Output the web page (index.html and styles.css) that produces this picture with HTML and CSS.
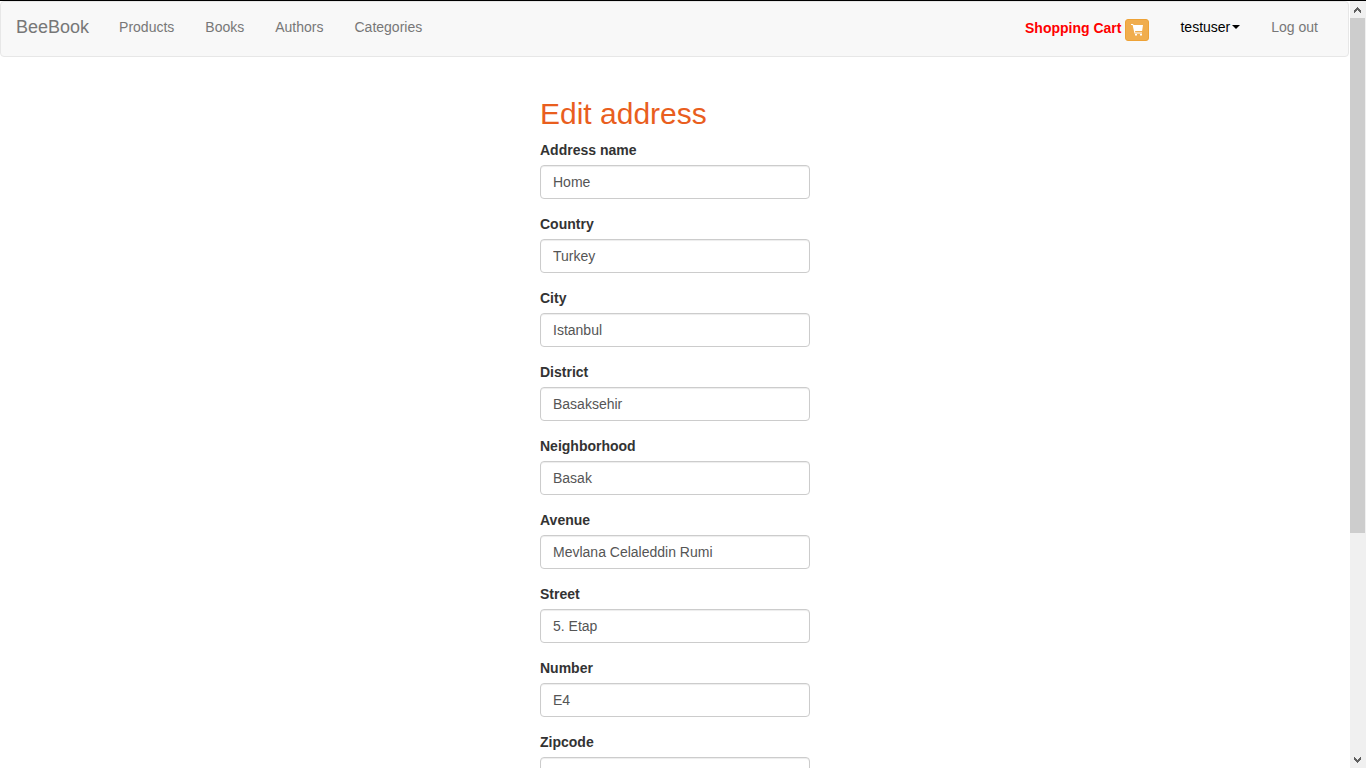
FILE: index.html
```html
<!DOCTYPE html>
<html lang="en">
<head>
<meta charset="utf-8">
<title>BeeBook - Edit address</title>
<link rel="stylesheet" href="styles.css">
</head>
<body>
<div class="viewport">
  <div class="page">
    <nav class="navbar">
      <a class="brand" href="#">BeeBook</a>
      <div class="nav-links">
        <a href="#">Products</a>
        <a href="#">Books</a>
        <a href="#">Authors</a>
        <a href="#">Categories</a>
      </div>
      <div class="nav-user">
        <div class="cart">
          <a class="cart-label" href="#">Shopping Cart</a>
          <button class="cart-button" type="button" aria-label="Open cart">
            <svg width="12" height="12" viewBox="0 0 12 12" aria-hidden="true">
              <path d="M0 0h2l.6 1H12l-.9 6H4l.3 1.5H11v1H3.5L1.6 1H0z"/>
              <path d="M4 10h2v1.5H4zM9 10h2v1.5H9z"/>
            </svg>
          </button>
        </div>
        <a class="user-menu" href="#">testuser<span class="caret"></span></a>
        <a href="#">Log out</a>
      </div>
    </nav>
    <main>
      <form class="address-form">
        <h2>Edit address</h2>
        <div class="field"><label for="name">Address name</label><input id="name" type="text" value="Home"></div>
        <div class="field"><label for="country">Country</label><input id="country" type="text" value="Turkey"></div>
        <div class="field"><label for="city">City</label><input id="city" type="text" value="Istanbul"></div>
        <div class="field"><label for="district">District</label><input id="district" type="text" value="Basaksehir"></div>
        <div class="field"><label for="neighborhood">Neighborhood</label><input id="neighborhood" type="text" value="Basak"></div>
        <div class="field"><label for="avenue">Avenue</label><input id="avenue" type="text" value="Mevlana Celaleddin Rumi"></div>
        <div class="field"><label for="street">Street</label><input id="street" type="text" value="5. Etap"></div>
        <div class="field"><label for="number">Number</label><input id="number" type="text" value="E4"></div>
        <div class="field"><label for="zipcode">Zipcode</label><input id="zipcode" type="text"></div>
      </form>
    </main>
  </div>
  <div class="scrollbar" aria-hidden="true">
    <svg class="arrow" width="16" height="17" viewBox="0 0 16 17"><path d="M7 6h1v1h1v1h1v1h1v3h-1v-1H9v-1H8V9H7v1H6v1H5v1H4V9h1V8h1V7h1z"/></svg>
    <div class="track"><div class="thumb"></div></div>
    <svg class="arrow" width="16" height="17" viewBox="0 0 16 17"><path d="M4 6h1v1h1v1h1v1h1V8h1V7h1V6h1v3h-1v1H9v1H8v1H7v-1H6v-1H5V9H4z"/></svg>
  </div>
</div>
</body>
</html>
```
FILE: styles.css
```css
* {
  box-sizing: border-box;
}

body {
  margin: 0;
  color: #333;
  background: #fff;
  font: 14px/20px "Liberation Sans", Arial, sans-serif;
}

.viewport {
  display: flex;
  height: 100vh;
  overflow: hidden;
  border-top: 1px solid #000;
}

.page {
  flex: 1;
  min-width: 0;
  overflow: hidden;
}

.navbar {
  display: flex;
  align-items: flex-start;
  gap: 30px;
  min-height: 56px;
  margin-right: 1px;
  padding: 15px 30px 15px 15px;
  border: 1px solid #e7e7e7;
  border-radius: 4px;
  background: #f8f8f8;
}

.navbar a {
  color: #777;
  text-decoration: none;
}

.navbar .brand {
  font-size: 18px;
}

.nav-links,
.nav-user {
  display: flex;
  gap: 31px;
}

.nav-user {
  margin-left: auto;
}

.cart {
  display: flex;
  gap: 4px;
  height: 20px;
}

.navbar .cart-label {
  padding-top: 1px;
  color: #f00;
  font-weight: bold;
}

.cart-button {
  display: flex;
  align-items: center;
  justify-content: center;
  width: 24px;
  height: 22px;
  margin-top: 2px;
  padding: 0;
  border: 1px solid #eea236;
  border-radius: 3px;
  background: #f0ad4e;
}

.cart-button svg {
  fill: #fff;
}

.navbar .user-menu {
  display: flex;
  align-items: center;
  gap: 2px;
  color: #000;
}

.caret {
  border-top: 4px solid #000;
  border-right: 4px solid transparent;
  border-left: 4px solid transparent;
}

.address-form {
  width: 270px;
  margin: 40px auto 0;
}

h2 {
  margin: 0 0 10px;
  color: #e95e1e;
  font-size: 30px;
  font-weight: normal;
  line-height: 33px;
}

.field {
  margin-bottom: 15px;
}

.field label {
  display: block;
  margin-bottom: 5px;
  font-weight: bold;
}

.field input {
  display: block;
  width: 100%;
  height: 34px;
  padding: 6px 12px;
  border: 1px solid #ccc;
  border-radius: 4px;
  color: #555;
  background: #fff;
  font: inherit;
  box-shadow: inset 0 1px 1px rgba(0, 0, 0, 0.075);
}

.scrollbar {
  display: flex;
  flex-direction: column;
  width: 16px;
  background: #f0f0f0;
}

.arrow {
  flex: none;
  fill: #606060;
}

.track {
  flex: 1;
  padding-right: 1px;
}

.thumb {
  height: 70.3%;
  background: #cdcdcd;
}
```
